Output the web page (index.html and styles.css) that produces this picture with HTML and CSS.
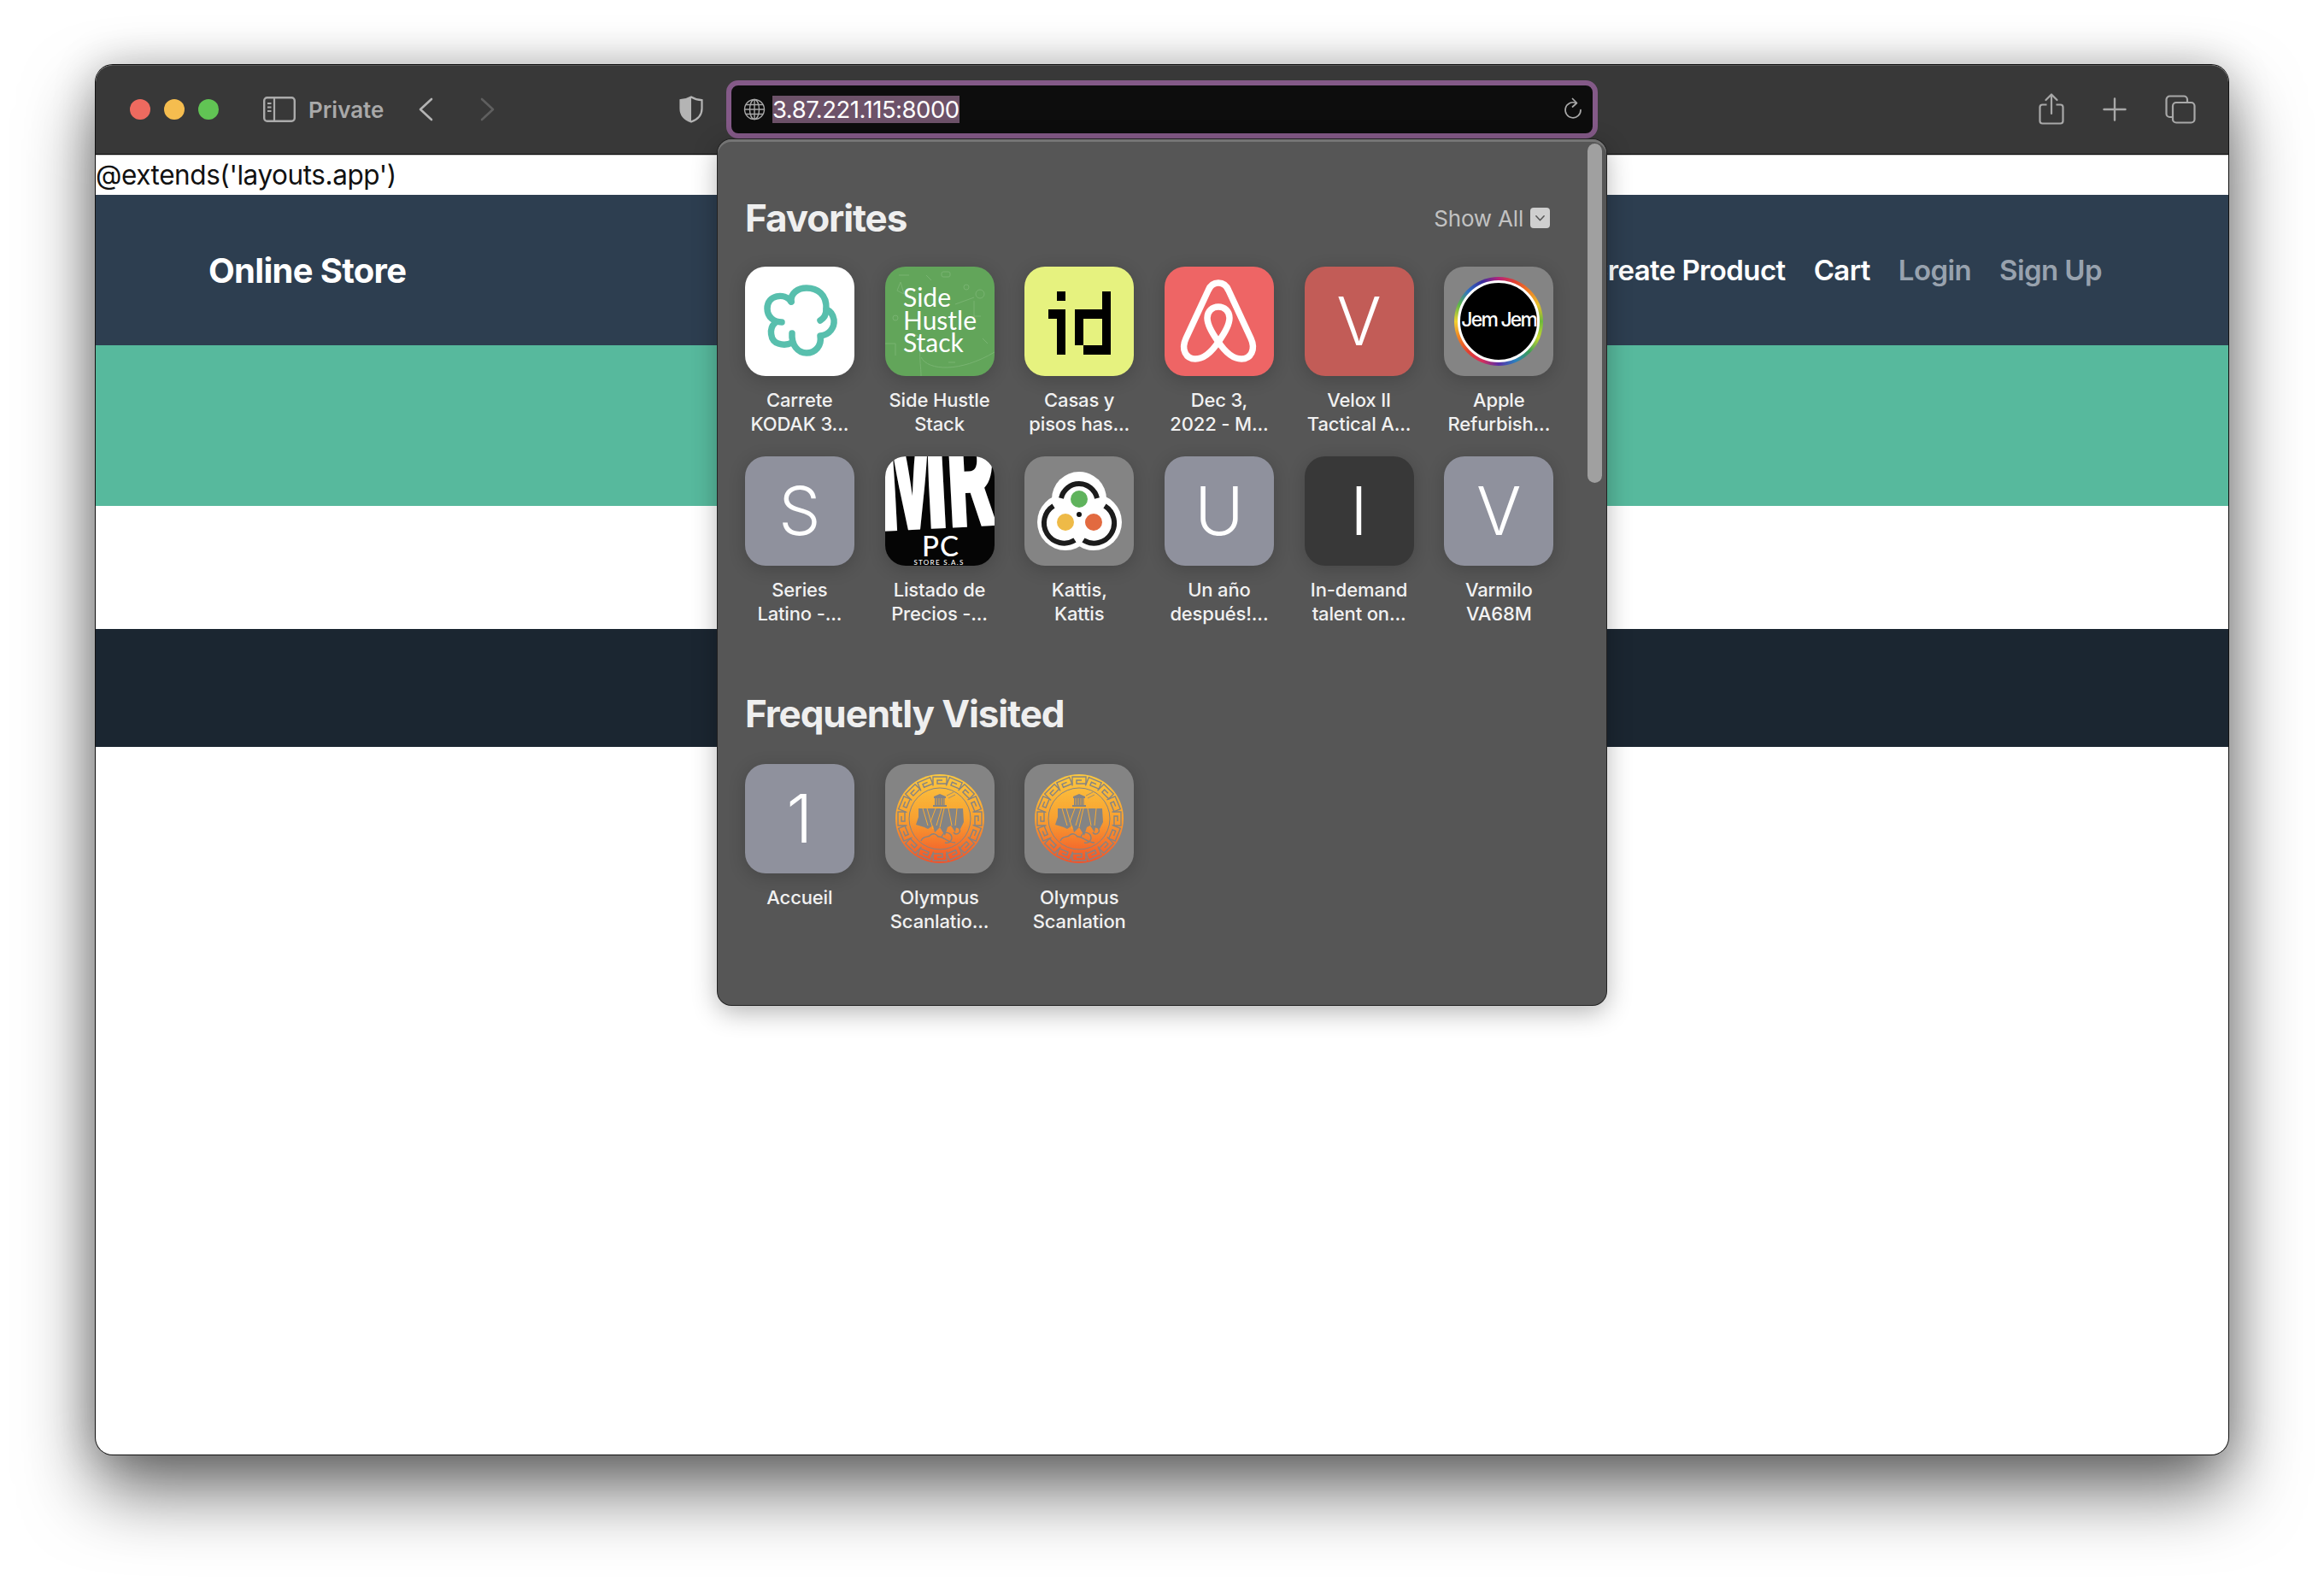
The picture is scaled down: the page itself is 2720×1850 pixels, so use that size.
FILE: index.html
```html
<!DOCTYPE html>
<html lang="en">
<head>
<meta charset="utf-8">
<title>Online Store</title>
<link rel="stylesheet" href="styles.css">
</head>
<body>
<svg class="defs" width="0" height="0" aria-hidden="true">
  <defs>
    <linearGradient id="oly" x1="0" y1="0" x2="0" y2="1">
      <stop offset="0" stop-color="#fcc83f"/>
      <stop offset=".5" stop-color="#f8a030"/>
      <stop offset="1" stop-color="#f2522a"/>
    </linearGradient>
    <path id="key" d="M-8 -38.500V-49H8V-41H-3V-45H3" fill="none" stroke="#848484" stroke-width="1.400"/>
    <symbol id="olympus" viewBox="0 0 128 128">
      <circle cx="64" cy="64" r="52" fill="url(#oly)"/>
      <g transform="translate(64 64)">
        <use href="#key"/><use href="#key" transform="rotate(22.5)"/><use href="#key" transform="rotate(45)"/><use href="#key" transform="rotate(67.5)"/>
        <use href="#key" transform="rotate(90)"/><use href="#key" transform="rotate(112.5)"/><use href="#key" transform="rotate(135)"/><use href="#key" transform="rotate(157.5)"/>
        <use href="#key" transform="rotate(180)"/><use href="#key" transform="rotate(202.5)"/><use href="#key" transform="rotate(225)"/><use href="#key" transform="rotate(247.5)"/>
        <use href="#key" transform="rotate(270)"/><use href="#key" transform="rotate(292.5)"/><use href="#key" transform="rotate(315)"/><use href="#key" transform="rotate(337.5)"/>
      </g>
      <circle cx="64" cy="64" r="36" fill="none" stroke="#848484" stroke-width="1"/>
      <path d="M39 52H91L92 68 88 76 83 74 82 80 77 72 73 74 70 84 64 74 58 80 56 72 50 76 46 74 36 71 39 62Z" fill="#848484"/>
      <path d="M44 52 50 72M49 52 56 76M59 52 53 68M69 52 64 74M74 52 78 72M84 52 82 72M66 52 60 72" fill="none" stroke="#f9ab34" stroke-width="1"/>
      <path d="M56 50H72V48H70V40H71V38L64 35 57 38V40H58V48H56Z" fill="#848484"/>
      <path d="M60 40V48M63 40V48M66 40V48M69 40V48" stroke="#f9ab34" stroke-width=".8"/>
      <path d="M72 37 80 33M74 40 82 36" stroke="#848484" stroke-width=".8"/>
      <path d="M42 90C44 84 50 86 52 84 56 80 60 82 62 85 68 84 72 92 82 92M70 92A6 6 0 1 0 66 86M80 80A4 4 0 1 0 82 74" fill="none" stroke="#848484" stroke-width="1.400"/>
    </symbol>
  </defs>
</svg>

<main class="window">
  <header class="toolbar">
    <div class="lights">
      <span class="light red"></span><span class="light yellow"></span><span class="light green"></span>
    </div>
    <svg class="ic-sidebar" viewBox="0 0 38 30"><rect x="1.200" y="1.200" width="35.600" height="27.600" rx="3.500" fill="none" stroke="#ababab" stroke-width="2.400"/><path d="M13 1.500V28.500" stroke="#ababab" stroke-width="2.200"/><path d="M5 8H9.500M5 12.500H9.500M5 17H9.500" stroke="#ababab" stroke-width="2"/></svg>
    <span class="private">Private</span>
    <svg class="ic-chev" viewBox="0 0 18 28"><path d="M16 2 3 14 16 26" fill="none" stroke="#b4b4b4" stroke-width="2.600" stroke-linecap="round" stroke-linejoin="round"/></svg>
    <svg class="ic-chev fwd" viewBox="0 0 18 28"><path d="M2 2 15 14 2 26" fill="none" stroke="#5f5f5f" stroke-width="2.600" stroke-linecap="round" stroke-linejoin="round"/></svg>
    <svg class="ic-shield" viewBox="0 0 28 32"><path d="M14 1.500C18 4 22 5 26.500 5.200V15C26.500 23 21 28 14 30.500 7 28 1.500 23 1.500 15V5.200C6 5 10 4 14 1.500Z" fill="none" stroke="#b4b4b4" stroke-width="2.200"/><path d="M14 1.500C10 4 6 5 1.500 5.200V15C1.500 23 7 28 14 30.500Z" fill="#b4b4b4"/></svg>
    <div class="address">
      <svg class="ic-globe" viewBox="0 0 26 26"><g fill="none" stroke="#a8a8a8" stroke-width="1.400"><circle cx="13" cy="13" r="11.500"/><ellipse cx="13" cy="13" rx="5.500" ry="11.500"/><path d="M13 1.500V24.500M1.500 13H24.500M3 7.500H23M3 18.500H23"/></g></svg>
      <span class="url">3.87.221.115:8000</span>
      <svg class="ic-reload" viewBox="0 0 22 28"><path d="M14.500 6.500A9 9 0 1 0 20 14.500" fill="none" stroke="#a8a8a8" stroke-width="1.700" stroke-linecap="round"/><path d="M10.500 1.500 15.500 6.500 10.500 11" fill="none" stroke="#a8a8a8" stroke-width="1.700" stroke-linecap="round" stroke-linejoin="round"/></svg>
    </div>
    <div class="tools">
      <svg class="ic-share" viewBox="0 0 30 37"><path d="M9.500 13.500H4.500A3 3 0 0 0 1.500 16.500V32.500A3 3 0 0 0 4.500 35.500H25.500A3 3 0 0 0 28.500 32.500V16.500A3 3 0 0 0 25.500 13.500H20.500" fill="none" stroke="#a8a8a8" stroke-width="2.200"/><path d="M15 24V2M8.500 8 15 1.500 21.500 8" fill="none" stroke="#a8a8a8" stroke-width="2.200" stroke-linecap="round" stroke-linejoin="round"/></svg>
      <svg class="ic-plus" viewBox="0 0 28 28"><path d="M14 1.500V26.500M1.500 14H26.500" stroke="#a8a8a8" stroke-width="2.400" stroke-linecap="round"/></svg>
      <svg class="ic-tabs" viewBox="0 0 36 34"><path d="M8 26H5.500A4 4 0 0 1 1.500 22V5.500A4 4 0 0 1 5.500 1.500H22A4 4 0 0 1 26 5.500V8" fill="none" stroke="#a8a8a8" stroke-width="2.200"/><rect x="9" y="9" width="25.500" height="23.500" rx="4" fill="none" stroke="#a8a8a8" stroke-width="2.200"/></svg>
    </div>
  </header>

  <div class="page">
    <p class="extends">@extends('layouts.app')</p>
    <nav class="nav">
      <a class="brand">Online Store</a>
      <div class="links">
        <a class="link">Create Product</a>
        <a class="link">Cart</a>
        <a class="link muted">Login</a>
        <a class="link muted">Sign Up</a>
      </div>
    </nav>
    <section class="hero"></section>
    <section class="gap"></section>
    <footer class="foot"></footer>
  </div>

  <aside class="popover">
    <span class="scroll"></span>
    <div class="head">
      <h2>Favorites</h2>
      <div class="showall">Show All
        <span class="box"><svg viewBox="0 0 14 10"><path d="M2 2.500 7 8 12 2.500" fill="none" stroke="#555" stroke-width="1.600" stroke-linecap="round" stroke-linejoin="round"/></svg></span>
      </div>
    </div>
    <div class="grid">
      <div class="cell">
        <svg class="tile" viewBox="0 0 128 128"><rect width="128" height="128" fill="#fff"/><g fill="none" stroke="#58bfad" stroke-width="7.500" stroke-linecap="round" stroke-linejoin="round"><path d="M54 41C46 30 26 33 26 49 26 59 34 65 43 65"/><path d="M35 66C28 72 29 87 39 90 45 92 51 91 55 89"/><path d="M55 78C54 92 62 101 72 101 82 101 90 93 88 81 99 80 105 71 104 62 103 56 100 52 95 50 96 32 84 25 72 25 62 25 53 31 54 41"/><path d="M88 63C93 60 95 55 95 50"/></g></svg>
        <p>Carrete<br>KODAK 3...</p>
      </div>
      <div class="cell">
        <svg class="tile" viewBox="0 0 128 128"><rect width="128" height="128" fill="#62a55a"/><g fill="none" stroke="#78b371" stroke-width="1"><path d="M42 128C42 118 40 110 41 96 44 78 30 74 22 84M42 106C50 122 88 124 128 100M82 44 104 36M104 40V60M104 58H112M0 90H12V104M16 10H28M48 10 54 16"/><circle cx="111" cy="32" r="5"/><circle cx="95" cy="24" r="3"/><rect x="66" y="6" width="10" height="6" rx="2"/><circle cx="12" cy="60" r="3"/><path d="M18 18 22 32 14 28ZM114 84 120 90M74 112H82"/></g><g class="sh-text"><text x="21" y="47">Side</text><text x="21" y="74">Hustle</text><text x="21" y="100">Stack</text></g></svg>
        <p>Side Hustle<br>Stack</p>
      </div>
      <div class="cell">
        <svg class="tile" viewBox="0 0 128 128"><rect width="128" height="128" fill="#e6f27f"/><path d="M38 29H48V40H38ZM28 50H48V103H38V61H28ZM91 29H101V103H69V92H91V61H69V92H59V50H91Z" fill="#000"/></svg>
        <p>Casas y<br>pisos has...</p>
      </div>
      <div class="cell">
        <svg class="tile" viewBox="0 0 128 128"><rect width="128" height="128" fill="#ee6565"/><g fill="none" stroke="#fff" stroke-width="7.500" stroke-linejoin="round"><path d="M63 19C57 19 53 23 51 28L25 84C19 97 25 108 36 108 45 108 55 100 63 88 71 100 81 108 90 108 101 108 107 97 101 84L75 28C73 23 69 19 63 19Z"/><path d="M63 88C55 77 50 68 50 60 50 52 56 47 63 47 70 47 76 52 76 60 76 68 71 77 63 88Z"/></g></svg>
        <p>Dec 3,<br>2022 - M...</p>
      </div>
      <div class="cell">
        <span class="tile letter velox">V</span>
        <p>Velox II<br>Tactical A...</p>
      </div>
      <div class="cell">
        <span class="tile jem">
          <span class="jem-ring"><span class="jem-disc">Jem Jem</span></span>
        </span>
        <p>Apple<br>Refurbish...</p>
      </div>
      <div class="cell">
        <span class="tile letter">S</span>
        <p>Series<br>Latino -...</p>
      </div>
      <div class="cell">
        <svg class="tile" viewBox="0 0 128 128"><rect width="128" height="128" fill="#050505"/><g class="mr-text"><text transform="translate(-7 88) rotate(-3) scale(.52 1)">MR</text></g><text class="pc-text" x="65" y="117">PC</text><text class="store-text" x="63" y="126.500">STORE S.A.S</text></svg>
        <p>Listado de<br>Precios -...</p>
      </div>
      <div class="cell">
        <svg class="tile" viewBox="0 0 128 128"><rect width="128" height="128" fill="#848484"/><g fill="#fff"><circle cx="64" cy="50" r="32"/><circle cx="48" cy="77" r="33"/><circle cx="81" cy="77" r="33"/></g><g fill="none" stroke="#1c1c1c" stroke-width="6"><path d="M43 49A21.500 21.500 0 0 1 85 49"/><path d="M34 58A23 23 0 1 0 59 98"/><path d="M94 58A23 23 0 1 1 69 98"/></g><circle cx="64" cy="50" r="10" fill="#5fb35c"/><circle cx="48" cy="77" r="10" fill="#eeba47"/><circle cx="81" cy="77" r="10" fill="#e26a40"/><circle cx="64" cy="68" r="3" fill="#111"/></svg>
        <p>Kattis,<br>Kattis</p>
      </div>
      <div class="cell">
        <span class="tile letter">U</span>
        <p>Un año<br>después!...</p>
      </div>
      <div class="cell">
        <span class="tile letter dark">I</span>
        <p>In-demand<br>talent on...</p>
      </div>
      <div class="cell">
        <span class="tile letter">V</span>
        <p>Varmilo<br>VA68M</p>
      </div>
    </div>
    <div class="head second">
      <h2>Frequently Visited</h2>
    </div>
    <div class="grid">
      <div class="cell">
        <span class="tile letter">1</span>
        <p>Accueil</p>
      </div>
      <div class="cell">
        <svg class="tile grey" viewBox="0 0 128 128"><use href="#olympus" width="128" height="128"/></svg>
        <p>Olympus<br>Scanlatio...</p>
      </div>
      <div class="cell">
        <svg class="tile grey" viewBox="0 0 128 128"><use href="#olympus" width="128" height="128"/></svg>
        <p>Olympus<br>Scanlation</p>
      </div>
    </div>
  </aside>
</main>
</body>
</html>
```

FILE: styles.css
```css
* { box-sizing: border-box; }
html, body { margin: 0; height: 1850px; background: #fff; overflow: hidden; }
body { padding: 76px 112px 148px 112px; font-family: Inter, "Liberation Sans", sans-serif; }
p, h2 { margin: 0; }
.defs { display: block; height: 0; }

.window {
  position: relative;
  height: 100%;
  display: flex;
  flex-direction: column;
  border-radius: 20px;
  background: #fff;
  box-shadow: 0 0 0 1px #111, 0 42px 84px rgba(0, 0, 0, .58), 0 0 50px rgba(0, 0, 0, .22);
}

/* toolbar */
.toolbar {
  height: 105px;
  flex: none;
  display: flex;
  align-items: center;
  padding: 0 38px 1px 40px;
  background: #383838;
  border-radius: 20px 20px 0 0;
  border-top: 1px solid #555;
  border-bottom: 1px solid #0c0c0c;
}
.lights { display: flex; gap: 16px; margin-right: 52px; }
.light { width: 24px; height: 24px; border-radius: 50%; }
.red { background: #ee6a5f; }
.yellow { background: #f5bd4f; }
.green { background: #61c454; }
.ic-sidebar { width: 38px; height: 30px; margin-right: 15px; }
.private { font-size: 26px; font-weight: 600; color: #a9a9a9; width: 88px; white-space: nowrap; margin-right: 40px; }
.ic-chev { width: 18px; height: 28px; margin-right: 55px; }
.ic-chev.fwd { margin-right: 215px; }
.ic-shield { width: 28px; height: 32px; margin-right: 27px; }
.address {
  width: 1020px;
  height: 68px;
  display: flex;
  align-items: center;
  padding: 0 12px 0 14px;
  background: #0d0d0d;
  border: 6px solid #845a88;
  border-radius: 14px;
}
.ic-globe { width: 26px; height: 26px; margin-right: 8px; }
.url { font-size: 27.500px; line-height: 32px; letter-spacing: -.5px; color: #fff; background: #6d5269; white-space: nowrap; }
.ic-reload { width: 22px; height: 28px; margin-left: auto; }
.tools { margin-left: auto; display: flex; align-items: center; gap: 45px; }
.ic-share { width: 30px; height: 37px; margin-top: -2px; }
.ic-plus { width: 28px; height: 28px; }
.ic-tabs { width: 36px; height: 34px; }

/* page */
.page { flex: 1; display: flex; flex-direction: column; border-radius: 0 0 20px 20px; overflow: hidden; border-top: 1px solid #c8c8c8; }
.extends { height: 46px; font-size: 31.500px; line-height: 46px; letter-spacing: -.43px; color: #111; background: #fff; }
.nav { height: 176px; display: flex; align-items: center; justify-content: space-between; padding: 0 148px 0 132px; background: #2d3e50; }
.brand { font-size: 40px; font-weight: 700; letter-spacing: -.7px; color: #fff; }
.links { display: flex; gap: 33px; }
.link { font-size: 33px; font-weight: 600; letter-spacing: -.6px; color: #fff; }
.muted { color: #98a2ae; }
.hero { height: 188px; background: #57b99d; }
.gap { height: 144px; background: #fff; }
.foot { height: 138px; background: #1b2631; }

/* popover */
.popover {
  position: absolute;
  left: 728px;
  top: 87px;
  width: 1040px;
  height: 1013px;
  padding: 0 0 0 14px;
  background: #565656;
  border-radius: 16px;
  box-shadow: 0 0 0 1px #222, inset 0 3px 0 #757575, 0 8px 30px rgba(0, 0, 0, .3);
}
.scroll { position: absolute; left: 1018px; top: 5px; width: 17px; height: 397px; border-radius: 9px; background: #a0a0a0; }
.head { height: 149px; padding: 35px 66px 0 18px; display: flex; align-items: center; justify-content: space-between; }
h2 { font-size: 44px; font-weight: 700; color: #efefef; letter-spacing: -1.100px; }
.second { height: 162px; padding-top: 43px; }
.showall { display: flex; align-items: center; gap: 8px; font-size: 26px; letter-spacing: -.2px; color: #c2c2c2; }
.box { width: 23px; height: 24px; display: flex; align-items: center; justify-content: center; background: #cfcfcf; border-radius: 4px; }
.box svg { width: 13px; height: 10px; }
.grid { display: grid; grid-template-columns: repeat(6, 163.700px); row-gap: 24px; }
.cell { display: flex; flex-direction: column; align-items: center; }
.cell p { height: 56px; margin-top: 14px; font-size: 22px; line-height: 28px; font-weight: 500; letter-spacing: -.15px; color: #f1f1f1; text-align: center; white-space: nowrap; }
.tile { width: 128px; height: 128px; display: block; flex: none; border-radius: 24px; box-shadow: 0 4px 20px rgba(0, 0, 0, .18); overflow: hidden; }
.grey { background: #848484; }
.letter { display: flex; align-items: center; justify-content: center; padding-bottom: 1px; font-size: 78px; font-weight: 300; line-height: 1; color: #fff; background: #8f919d; }
.velox { background: #c25c57; }
.dark { background: #383838; }
.jem { display: flex; align-items: center; justify-content: center; background: #848484; }
.jem-ring { width: 104px; height: 104px; padding: 4px; border-radius: 50%; background: conic-gradient(#b5237a, #e2402f, #f07f24, #e8c02c, #6dbb3c, #c6d82f, #3b9c56, #2a7fc0, #5a2ea6, #d62e5c, #e2402f, #f07f24, #f2d32f, #5fb848, #2d6fc4, #3a2c9e, #b5237a); }
.jem-disc { width: 96px; height: 96px; display: flex; align-items: center; justify-content: center; padding-bottom: 4px; border-radius: 50%; background: #000; border: 3px solid #fff; color: #fff; font-size: 23px; font-weight: 500; letter-spacing: -1.800px; white-space: nowrap; }
.sh-text text { font-family: Lato, Inter, sans-serif; font-size: 30px; font-weight: 400; fill: #fff; }
.mr-text text { font-family: Inter, "Liberation Sans", sans-serif; font-size: 165px; font-weight: 900; fill: #fff; }
.pc-text { font-family: Lato, Inter, sans-serif; font-size: 33px; font-weight: 500; fill: #fff; text-anchor: middle; letter-spacing: 1px; }
.store-text { font-family: Lato, Inter, sans-serif; font-size: 8px; font-weight: 500; fill: #fff; text-anchor: middle; letter-spacing: 1.300px; }
```
